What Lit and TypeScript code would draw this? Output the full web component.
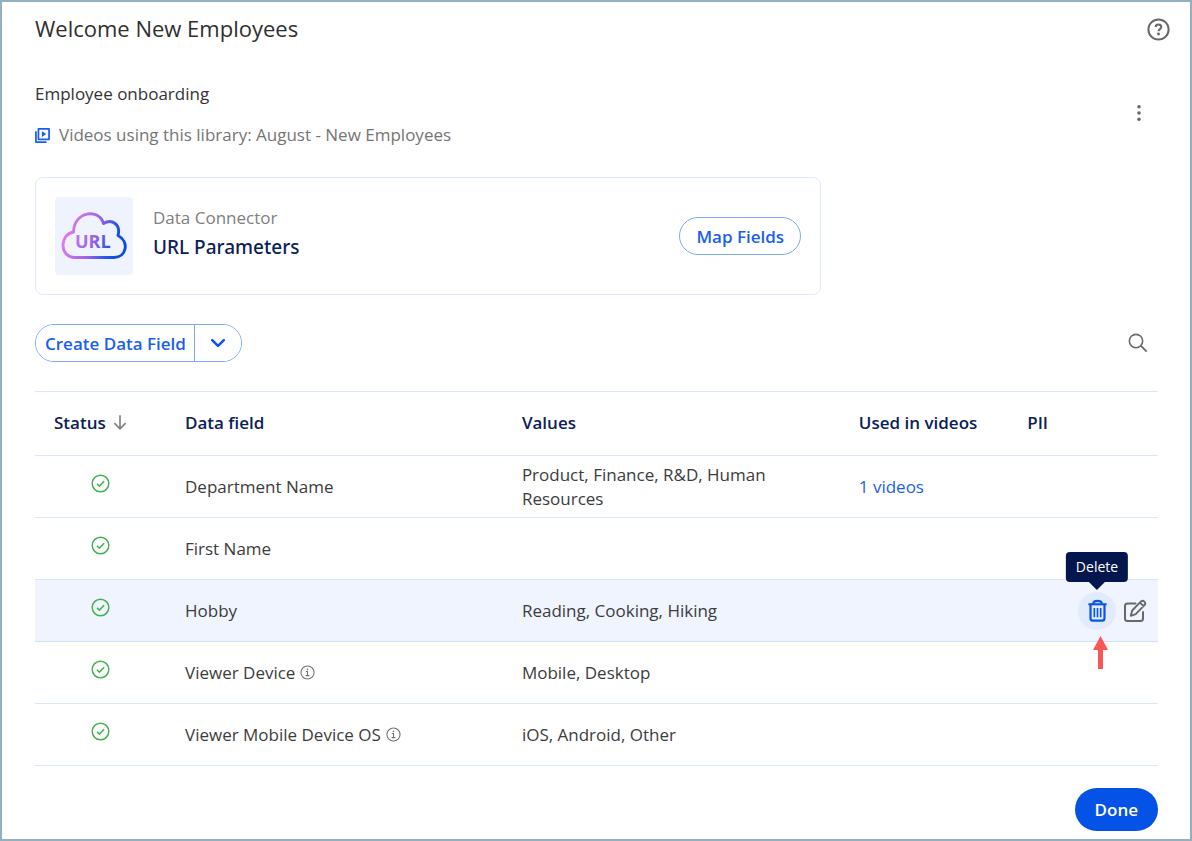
import { LitElement, html, css, svg, nothing } from "lit";
import { customElement, property } from "lit/decorators.js";

interface Field {
  name: string;
  values: string;
  videos?: string;
  info?: boolean;
  active?: boolean;
}

const FIELDS: Field[] = [
  { name: "Department Name", values: "Product, Finance, R&D, Human Resources", videos: "1 videos" },
  { name: "First Name", values: "" },
  { name: "Hobby", values: "Reading, Cooking, Hiking", active: true },
  { name: "Viewer Device", values: "Mobile, Desktop", info: true },
  { name: "Viewer Mobile Device OS", values: "iOS, Android, Other", info: true },
];

const SHAPES = {
  help: svg`<circle cx="12" cy="12" r="9.700" stroke-width="1.900"/><path d="M9.2 9.7c0-3.3 5.5-3.3 5.5 0 0 1.9-2.7 2-2.7 4" stroke-width="1.9"/><circle cx="12" cy="16.3" r="1.4" fill="currentColor" stroke="none"/>`,
  dots: svg`<g fill="currentColor" stroke="none"><circle cx="12" cy="5.7" r="1.8"/><circle cx="12" cy="12" r="1.8"/><circle cx="12" cy="18.3" r="1.8"/></g>`,
  library: svg`<path d="M5.500 1.500h17v16.500h-17z M1.500 5v17.500h17" stroke-width="2.800" stroke-linejoin="round"/><path d="M11 5v9.500l7-4.750z" fill="currentColor" stroke="none"/>`,
  chevron: svg`<path d="M5 8.5l7 7 7-7" stroke-width="3" stroke-linecap="round" stroke-linejoin="round"/>`,
  search: svg`<circle cx="9.6" cy="9.6" r="8" stroke-width="1.9"/><path d="M15.200 15.200l7.200 7.200" stroke-width="2.100"/>`,
  down: svg`<path d="M12 3v18M4.500 13.500L12 21l7.500-7.500" stroke-width="2.200"/>`,
  check: svg`<circle cx="12" cy="12" r="10.500" stroke-width="1.800"/><path d="M7.500 12.300l3.100 3 6-6.100" stroke-width="1.900"/>`,
  info: svg`<circle cx="12" cy="12" r="10.500" stroke-width="1.700"/><path d="M9.500 10.500H12v6.500M9 17h6" stroke-width="1.700"/><circle cx="12" cy="7" r="1.300" fill="currentColor" stroke="none"/>`,
  trash: svg`<path d="M2.500 5.500h19" stroke-width="2.200"/><path d="M7.500 5.300c0-4.400 9-4.400 9 0" stroke-width="2.200"/><path d="M4.700 5.500v14.500q0 2.500 2.500 2.500h9.600q2.500 0 2.500-2.500V5.500" stroke-width="2.300"/><path d="M8.700 9.500v9.500M12 9.500v9.500M15.300 9.500v9.500" stroke-width="1.700"/>`,
  edit: svg`<path d="M12.500 4.500H4.500q-2.500 0-2.500 2.500v12.500q0 2.500 2.500 2.500h13q2.500 0 2.500-2.500V13" stroke-width="2" stroke-linecap="round"/><path d="M7.800 16.800l1.400-5.300L18 2.400c2.300-1.800 5.400 1.200 3.700 3.500l-9 9.300z M17 3.600l3.700 3.600" stroke-width="1.900" stroke-linejoin="round"/>`,
};

@customElement("ui-icon")
class UiIcon extends LitElement {
  @property() name: keyof typeof SHAPES = "help";
  @property({ type: Number }) size = 24;

  static styles = css`
    :host { display: inline-flex; flex: none; }
    .icon { display: block; fill: none; stroke: currentColor; }
  `;

  render() {
    return html`<svg class="icon" width=${this.size} height=${this.size} viewBox="0 0 24 24" aria-hidden="true">${SHAPES[this.name]}</svg>`;
  }
}

@customElement("connector-card")
class ConnectorCard extends LitElement {
  static styles = css`
    :host { display: block; }
    .card {
      display: flex; align-items: center; gap: 20px; box-sizing: border-box;
      width: 70%; min-width: 480px; padding: 19px; min-height: 118px;
      border: 1px solid #dfe9fd; border-radius: 8px;
    }
    .logo {
      display: flex; align-items: center; justify-content: center; flex: none;
      width: 78px; height: 78px; border-radius: 4px; background: #eff3fd;
    }
    .word { font: 700 18px "Open Sans", "Noto Sans", sans-serif; fill: url(#tint); }
    .text { flex: 1; display: flex; flex-direction: column; padding-bottom: 6px; }
    .kind { font-size: 17px; line-height: 28px; color: #808080; }
    .title { font: 500 19px "Noto Sans", "Open Sans", sans-serif; line-height: 30px; color: #0b2059; }
    .map {
      height: 38px; padding: 0 16px; border: 1px solid #7fa9f6; border-radius: 20px;
      background: #fff; color: #1a5fec; font: 600 17px "Open Sans", "Noto Sans", sans-serif; cursor: pointer;
    }
  `;

  render() {
    return html`
      <section class="card">
        <div class="logo">
          <svg width="66" height="48" viewBox="0 0 66 48" aria-hidden="true">
            <defs>
              <linearGradient id="tint" gradientUnits="userSpaceOnUse" x1="4" y1="14" x2="62" y2="34">
                <stop offset="0" stop-color="#e67cf0"/>
                <stop offset="0.5" stop-color="#9a63ea"/>
                <stop offset="0.85" stop-color="#1552ea"/>
                <stop offset="1" stop-color="#0a4be6"/>
              </linearGradient>
            </defs>
            <path d="M14 45.500C-1 45.500-2.500 23 12.500 20 13-1 38-4 42.500 11.500 51 6 60 13 57 23.500 69 30 65 45.500 53 45.500Z" fill="none" stroke="url(#tint)" stroke-width="2.900" stroke-linejoin="round"/>
            <text class="word" x="14" y="36">URL</text>
          </svg>
        </div>
        <div class="text">
          <span class="kind">Data Connector</span>
          <span class="title">URL Parameters</span>
        </div>
        <button class="map" type="button">Map Fields</button>
      </section>
    `;
  }
}

@customElement("field-table")
class FieldTable extends LitElement {
  static styles = css`
    :host { display: block; }
    .table { width: 100%; table-layout: fixed; border-collapse: separate; border-spacing: 0; border-top: 1px solid #d9e6fc; }
    .status { width: 131px; }
    .wide { width: 30%; }
    .used { width: 15%; }
    .head {
      height: 64px; box-sizing: border-box; padding: 0 19px 3px; text-align: left;
      border-bottom: 1px solid #d9e6fc; font-size: 17px; font-weight: 600; color: #0b2059; white-space: nowrap;
    }
    .sort { display: flex; align-items: center; gap: 5px; padding: 0; border: 0; background: none; font: inherit; color: inherit; cursor: pointer; }
    .arrow { color: #808080; }
    .cell {
      box-sizing: border-box; height: 62px; padding: 0 19px; border-bottom: 1px solid #d9e6fc;
      font-size: 17px; line-height: 24px; color: #3c3c3c;
    }
    .mark { text-align: center; line-height: 0; color: #3fb24b; padding-bottom: 6px; }
    .active .cell { background: #eff4fe; border-bottom-color: #d3e0fa; }
    .name { display: flex; align-items: center; gap: 5px; }
    .note { color: #6f6f6f; }
    .link { color: #1a5fec; text-decoration: none; }
    .tools { padding-right: 4px; }
    .actions { display: flex; justify-content: flex-end; }
    .anchor { position: relative; display: flex; }
    .tool {
      display: flex; align-items: center; justify-content: center; width: 38px; height: 38px;
      padding: 0; border: 0; border-radius: 50%; background: none; color: #686868; cursor: pointer;
    }
    .danger { background: #e1ebfc; color: #0a55e8; }
    .tip {
      position: absolute; left: 50%; bottom: 48px; transform: translateX(-50%); padding: 0 10px;
      border-radius: 4px; background: #03164e; color: #fff; font-size: 14px; line-height: 30px;
    }
    .tip::after {
      content: ""; position: absolute; left: 50%; top: 100%; transform: translateX(-50%);
      border: 8px solid transparent; border-top-color: #03164e; border-bottom: 0;
    }
    .pointer { position: absolute; left: 15px; top: 44px; }
  `;

  private row(f: Field) {
    return html`
      <tr class=${f.active ? "active" : ""}>
        <td class="cell mark"><ui-icon name="check" size="19"></ui-icon></td>
        <td class="cell"><span class="name">${f.name}${f.info ? html`<ui-icon class="note" name="info" size="15"></ui-icon>` : nothing}</span></td>
        <td class="cell">${f.values}</td>
        <td class="cell">${f.videos ? html`<a class="link" href="#">${f.videos}</a>` : nothing}</td>
        <td class="cell tools">${f.active ? this.actions() : nothing}</td>
      </tr>
    `;
  }

  private actions() {
    return html`
      <div class="actions">
        <div class="anchor">
          <button class="tool danger" type="button" aria-label="Delete field"><ui-icon name="trash" size="23"></ui-icon></button>
          <span class="tip" role="tooltip">Delete</span>
          <svg class="pointer" width="15" height="33" viewBox="0 0 15 33" aria-hidden="true">
            <path d="M7.500 0L15 14H10V33H5V14H0Z" fill="#fb5656"/>
          </svg>
        </div>
        <button class="tool" type="button" aria-label="Edit field"><ui-icon name="edit" size="24"></ui-icon></button>
      </div>
    `;
  }

  render() {
    return html`
      <table class="table">
        <thead>
          <tr>
            <th class="head status" scope="col"><button class="sort" type="button">Status<ui-icon class="arrow" name="down" size="18"></ui-icon></button></th>
            <th class="head wide" scope="col">Data field</th>
            <th class="head wide" scope="col">Values</th>
            <th class="head used" scope="col">Used in videos</th>
            <th class="head" scope="col">PII</th>
          </tr>
        </thead>
        <tbody>${FIELDS.map((f) => this.row(f))}</tbody>
      </table>
    `;
  }
}

@customElement("app-root")
class AppRoot extends LitElement {
  static styles = css`
    :host {
      display: block; box-sizing: border-box; min-height: 100vh; border: 2px solid #93b0be;
      background: #fff; color: #333; font-family: "Open Sans", "Noto Sans", sans-serif;
    }
    .top { display: flex; align-items: center; justify-content: space-between; padding: 10px 19px 0 33px; }
    .title { margin: 0; font-size: 22px; line-height: 32px; font-weight: 400; color: #2f2f2f; }
    .main { padding: 38px 32px 8px 33px; }
    .bare { display: flex; padding: 0; border: 0; background: none; color: #686868; cursor: pointer; }
    .help { padding-top: 2px; }
    .dots { padding-bottom: 4px; }
    .intro { display: flex; align-items: center; justify-content: space-between; padding-right: 7px; margin-bottom: 30px; }
    .name { margin: 0 0 17px; font-size: 17px; line-height: 24px; }
    .usage { display: flex; align-items: center; gap: 9px; margin: 0; font-size: 17px; line-height: 24px; color: #757575; }
    .blue { color: #1a5fec; }
    .bar { display: flex; align-items: center; justify-content: space-between; padding-right: 10px; margin: 29px 0; }
    .split { display: flex; height: 38px; box-sizing: border-box; border: 1px solid #7fa9f6; border-radius: 19px; overflow: hidden; }
    .create, .more { border: 0; background: #fff; color: #1a5fec; font: 600 17px "Open Sans", "Noto Sans", sans-serif; cursor: pointer; }
    .create { padding: 0 8px 0 9px; }
    .more { display: flex; align-items: center; justify-content: center; width: 47px; padding: 0; border-left: 1px solid #7fa9f6; color: #0a55e8; }
    .foot { display: flex; justify-content: flex-end; margin-top: 22px; }
    .done {
      height: 43px; padding: 0 20px; border: 0; border-radius: 22px; background: #0453e6; color: #fff;
      font: 600 17px "Open Sans", "Noto Sans", sans-serif; cursor: pointer;
    }
  `;

  render() {
    return html`
      <header class="top">
        <h1 class="title">Welcome New Employees</h1>
        <button class="bare help" type="button" aria-label="Help"><ui-icon name="help" size="25"></ui-icon></button>
      </header>
      <main class="main">
        <div class="intro">
          <div>
            <p class="name">Employee onboarding</p>
            <p class="usage"><ui-icon class="blue" name="library" size="15"></ui-icon>Videos using this library: August - New Employees</p>
          </div>
          <button class="bare dots" type="button" aria-label="More options"><ui-icon name="dots" size="24"></ui-icon></button>
        </div>
        <connector-card></connector-card>
        <div class="bar">
          <div class="split">
            <button class="create" type="button">Create Data Field</button>
            <button class="more" type="button" aria-label="More create options"><ui-icon name="chevron" size="20"></ui-icon></button>
          </div>
          <button class="bare" type="button" aria-label="Search"><ui-icon name="search" size="20"></ui-icon></button>
        </div>
        <field-table></field-table>
        <div class="foot"><button class="done" type="button">Done</button></div>
      </main>
    `;
  }
}
